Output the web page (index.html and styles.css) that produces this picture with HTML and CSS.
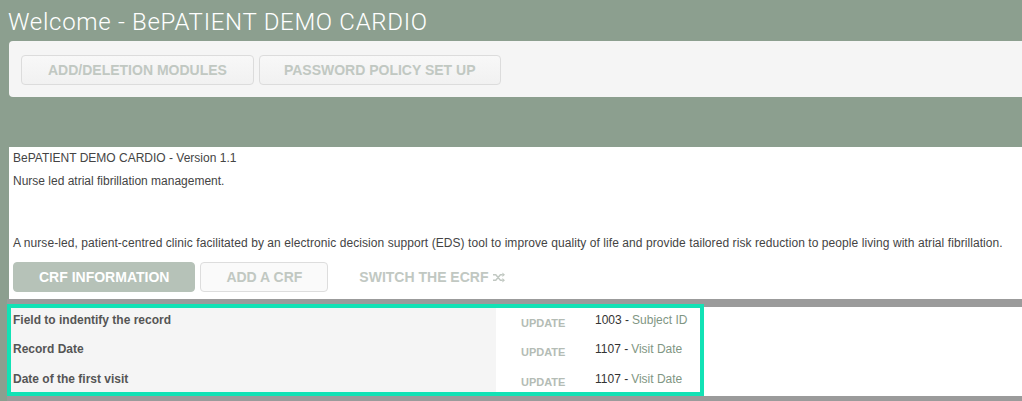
FILE: index.html
```html
<!DOCTYPE html>
<html lang="en">
<head>
<meta charset="utf-8">
<title>Welcome - BePATIENT DEMO CARDIO</title>
<link rel="stylesheet" href="styles.css">
</head>
<body>
  <h1 class="title">Welcome - BePATIENT DEMO CARDIO</h1>
  <div class="panel">
    <button class="btn">ADD/DELETION MODULES</button>
    <button class="btn">PASSWORD POLICY SET UP</button>
  </div>

  <section class="study">
    <p class="line">BePATIENT DEMO CARDIO - Version 1.1</p>
    <p class="line">Nurse led atrial fibrillation management.</p>
    <p class="line desc">A nurse-led, patient-centred clinic facilitated by an electronic decision support (EDS) tool to improve quality of life and provide tailored risk reduction to people living with atrial fibrillation.</p>
    <div class="actions">
      <button class="btn btn-primary">CRF INFORMATION</button>
      <button class="btn btn-light">ADD A CRF</button>
      <a class="btn btn-link">SWITCH THE ECRF <svg class="shuffle" viewBox="0 0 12 10" width="12" height="11" aria-hidden="true"><path d="M0 2.2h2.8l4.6 5.6h2.2M0 7.8h2.8l4.6-5.6h2.2" fill="none" stroke="currentColor" stroke-width="1.4"/><path d="M9.4 0l2.6 2.2-2.6 2.2zM9.4 5.6l2.6 2.2-2.6 2.2z" fill="currentColor"/></svg></a>
    </div>
  </section>

  <div class="records">
    <div class="record-row">
      <div class="record-table">
        <div class="label">Field to indentify the record</div>
        <div class="update"><span>UPDATE</span></div>
        <div class="value"><span class="num">1003 -</span> <span class="name">Subject ID</span></div>

        <div class="label">Record Date</div>
        <div class="update"><span>UPDATE</span></div>
        <div class="value"><span class="num">1107 -</span> <span class="name">Visit Date</span></div>

        <div class="label">Date of the first visit</div>
        <div class="update"><span>UPDATE</span></div>
        <div class="value"><span class="num">1107 -</span> <span class="name">Visit Date</span></div>
      </div>
      <div class="record-fill"></div>
    </div>
  </div>
</body>
</html>
```

FILE: styles.css
```css
html, body {
  margin: 0;
  padding: 0;
}

body {
  background: #8c9f8f;
  font-family: "Liberation Sans", Arial, Helvetica, sans-serif;
  font-size: 12px;
  color: #444;
  overflow: hidden;
}

.title {
  margin: 0 0 5px 0;
  padding: 8px 0 0 8px;
  font-family: Roboto, "Liberation Sans", sans-serif;
  font-weight: 300;
  font-size: 24px;
  line-height: 28px;
  color: #ffffff;
  letter-spacing: 0.7px;
  white-space: nowrap;
}

.panel {
  display: flex;
  gap: 5px;
  box-sizing: border-box;
  height: 56px;
  margin: 0 0 50px 9px;
  padding: 14px 12px 0;
  background: #f5f5f5;
  border-radius: 4px 0 0 4px;
}

.btn {
  display: inline-flex;
  align-items: center;
  justify-content: center;
  box-sizing: border-box;
  height: 30px;
  padding: 0 25px;
  font-family: "Liberation Sans", Arial, Helvetica, sans-serif;
  font-weight: bold;
  font-size: 14px;
  color: #c1c8c2;
  background: linear-gradient(#f8f8f8, #f1f1f1);
  border: 1px solid #dcdcdc;
  border-radius: 4px;
  cursor: pointer;
  white-space: nowrap;
}

.panel .btn {
  height: 30px;
  padding: 0 26px;
}

.panel .btn + .btn {
  padding: 0 24px;
}

.study {
  box-sizing: border-box;
  height: 152px;
  margin-left: 9px;
  padding: 0 4px;
  background: #ffffff;
}

.line {
  margin: 0;
  line-height: 23px;
  white-space: nowrap;
}

.desc {
  margin-top: 39px;
  letter-spacing: 0.07px;
}

.actions {
  display: flex;
  gap: 5px;
  margin-top: 7px;
}

.btn-primary {
  background: #b6c2b8;
  border-color: #b6c2b8;
  color: #ffffff;
}

.btn-light {
  background: #fafafa;
  border-color: #dddddd;
}

.btn-link {
  background: none;
  border-color: transparent;
  gap: 0;
}

.shuffle {
  margin-left: 5px;
}

.records {
  margin-left: 7px;
  padding: 5px 0;
  background: #9b9b9b;
}

.record-row {
  display: flex;
  height: 92px;
}

.record-table {
  display: grid;
  grid-template-columns: 489px 99px 109px;
  grid-auto-rows: 29.5px;
  align-content: start;
  box-sizing: border-box;
  width: 697px;
  padding-top: 1px;
  background: #ffffff;
  outline: 4px solid #12e2b5;
  outline-offset: -4px;
}

.record-fill {
  flex: 1;
  margin-top: 3px;
  background: #ffffff;
}

.label {
  display: flex;
  align-items: center;
  padding-left: 6px;
  background: #f5f5f5;
  font-weight: bold;
  color: #555;
}

.update {
  display: flex;
  align-items: center;
  padding-left: 25px;
}

.update span {
  margin-top: 6px;
  font-weight: bold;
  font-size: 11px;
  color: #b4bcb5;
}

.value {
  display: flex;
  align-items: center;
  gap: 3px;
  white-space: nowrap;
}

.num {
  color: #333;
}

.name {
  color: #7f9683;
}
```
